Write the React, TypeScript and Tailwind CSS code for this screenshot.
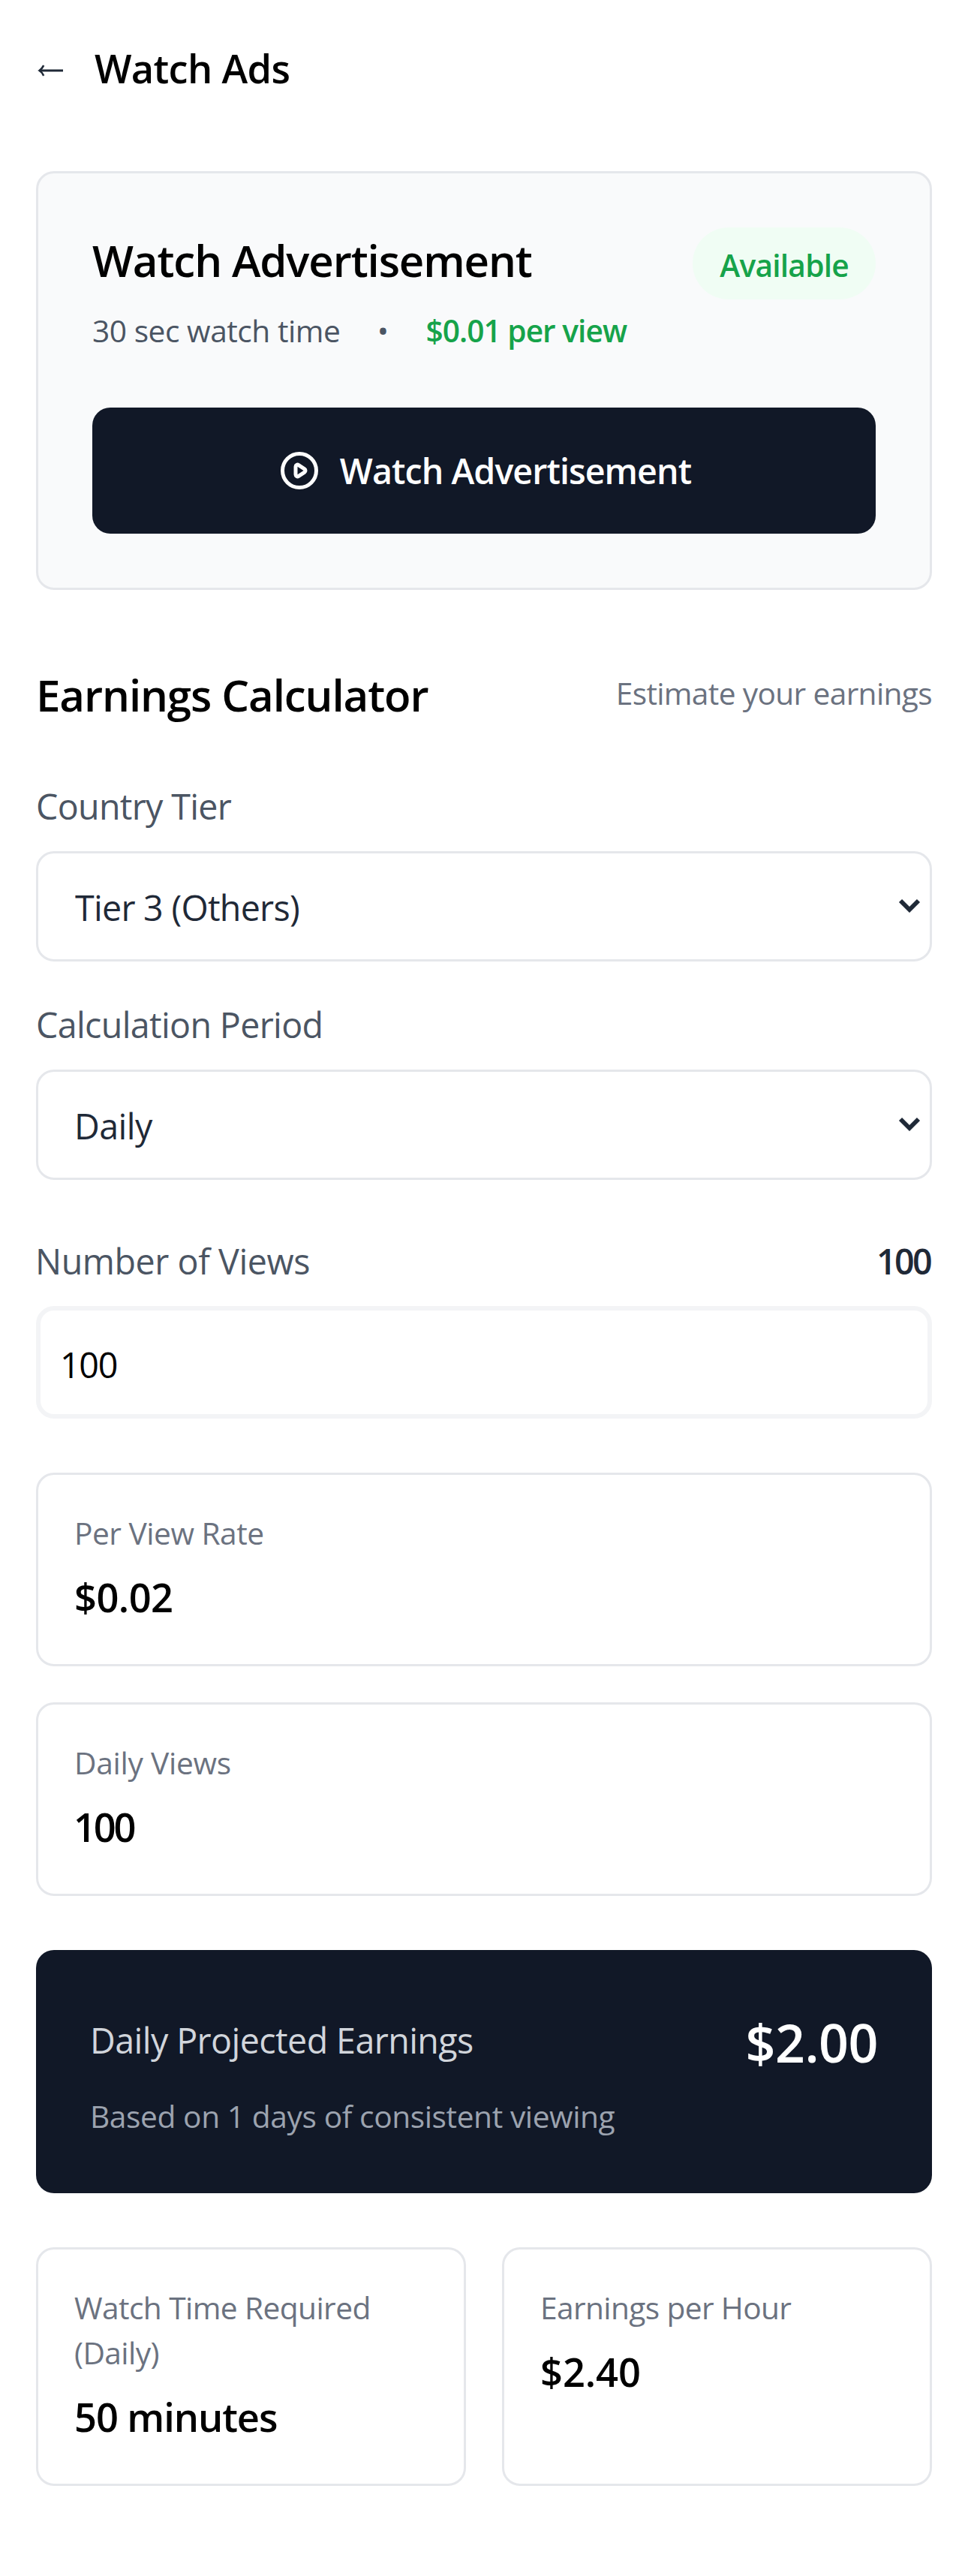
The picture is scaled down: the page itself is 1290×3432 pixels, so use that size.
import React, { useState } from "react";

/* Type scale: each entry keeps its line box height constant (84, 84, 72, 60, 96). */
const t60 = "text-[58.2px] leading-[81px] pt-[3px] font-semibold";
const t54 = "text-[52.4px] leading-[83px] pt-px font-semibold";
const t48 = "text-[46.6px] leading-[72px]";
const t42 = "text-[40.7px] leading-[58px] pb-0.5";
const t72 = "text-[69.8px] leading-[91px] pt-[5px] font-semibold";

function BackArrow() {
  return (
    <svg width="48" height="24" viewBox="0 0 48 24" fill="none" stroke="#1f2937" strokeWidth="3" className="mt-[7px] shrink-0">
      <path d="M4.5 12H36" />
      <path d="M10.2 5.2C8.6 8.4 6.8 10.6 4.6 12C6.8 13.4 8.6 15.6 10.2 18.8" strokeWidth="2.6" />
    </svg>
  );
}

function PlayCircle() {
  return (
    <svg width="60" height="60" viewBox="0 0 24 24" fill="none" stroke="currentColor" strokeWidth="2" strokeLinecap="round" strokeLinejoin="round" className="shrink-0">
      <path d="M14.752 11.168l-3.197-2.132A1 1 0 0010 9.87v4.263a1 1 0 001.555.832l3.197-2.132a1 1 0 000-1.664z" />
      <path d="M21 12a9 9 0 11-18 0 9 9 0 0118 0z" />
    </svg>
  );
}

function SelectField({ label, labelClass, options, selectClass }: { label: string; labelClass: string; options: string[]; selectClass: string }) {
  const [value, setValue] = useState(options[0]);
  return (
    <div>
      <label className={`${t48} mb-6 block text-[#4b5563] ${labelClass}`}>{label}</label>
      <div className="relative">
        <select
          value={value}
          onChange={(e) => setValue(e.target.value)}
          className={`${t48} block h-[147px] w-full appearance-none rounded-[24px] border-[3px] border-[#e5e7eb] bg-white pt-[3px] pr-20 text-[#1f2937] outline-none ${selectClass}`}
        >
          {options.map((o) => (
            <option key={o}>{o}</option>
          ))}
        </select>
        <svg width="30" height="20" viewBox="0 0 30 20" fill="none" stroke="#1f2937" strokeWidth="5.8" className="pointer-events-none absolute top-[63px] right-[15px]">
          <path d="M3 3L15 15L27 3" />
        </svg>
      </div>
    </div>
  );
}

function StatCard({ label, value, labelClass, valueClass }: { label: string; value: string; labelClass: string; valueClass: string }) {
  return (
    <div className="rounded-[24px] border-[3px] border-[#e5e7eb] bg-white p-12">
      <div className={`${t42} text-[#6b7280] ${labelClass}`}>{label}</div>
      <div className={`${t54} mt-3 ${valueClass}`}>{value}</div>
    </div>
  );
}

export default function App() {
  const [views, setViews] = useState("100");
  return (
    <div className="min-h-[3432px] w-[1290px] bg-white px-12 pt-12 pb-[120px] font-['Open_Sans','Noto_Sans',sans-serif] text-black">
      <header className="flex h-[84px] items-center gap-[30px]">
        <BackArrow />
        <h1 className={`${t54} tracking-[-0.0129em]`}>Watch Ads</h1>
      </header>

      <section className="mt-24 rounded-[24px] border-[3px] border-[#e5e7eb] bg-[#f9fafb] p-[72px]">
        <div className="flex items-start justify-between">
          <h2 className={`${t60} tracking-[-0.0195em]`}>Watch Advertisement</h2>
          <span className="rounded-full bg-[#f0fdf4] px-9 pt-[21px] pb-[17px] text-[40.7px] leading-[58px] font-semibold tracking-[-0.019em] text-[#16a34a]">
            Available
          </span>
        </div>
        <div className={`${t42} mt-3 flex gap-12 text-[#4b5563]`}>
          <span className="tracking-[-0.0115em]">30 sec watch time</span>
          <span className="w-[18px] text-center">•</span>
          <span className="font-semibold tracking-[-0.024em] text-[#16a34a]">$0.01 per view</span>
        </div>
        <button className="mt-[72px] flex h-[168px] w-full items-center justify-center gap-6 rounded-[24px] bg-[#111827] text-white">
          <PlayCircle />
          <span className={`${t48} font-semibold tracking-[-0.0203em]`}>Watch Advertisement</span>
        </button>
      </section>

      <div className="mt-24 flex items-center justify-between">
        <h2 className={`${t60} tracking-[-0.019em]`}>Earnings Calculator</h2>
        <span className={`${t42} tracking-[-0.0161em] text-[#6b7280]`}>Estimate your earnings</span>
      </div>

      <div className="mt-[72px] flex flex-col gap-12">
        <SelectField
          label="Country Tier"
          labelClass="tracking-[-0.0145em]"
          options={["Tier 3 (Others)", "Tier 2", "Tier 1"]}
          selectClass="pl-[49px] tracking-[-0.0156em]"
        />
        <SelectField
          label="Calculation Period"
          labelClass="tracking-[-0.014em]"
          options={["Daily", "Weekly", "Monthly"]}
          selectClass="pl-12 tracking-[-0.012em]"
        />
      </div>

      <div className={`${t48} mt-[72px] flex justify-between`}>
        <label className="-ml-px tracking-[-0.0093em] text-[#4b5563]">Number of Views</label>
        <span className="mr-0.5 font-semibold tracking-[-0.0575em] text-[#1f2937]">{views}</span>
      </div>
      <input
        value={views}
        onChange={(e) => setViews(e.target.value)}
        className={`${t48} mt-6 block h-[150px] w-full rounded-[24px] border-[6px] border-[#f3f4f6] bg-white pt-[6px] pr-6 pl-[26px] tracking-[-0.0282em] outline-none`}
      />

      <div className="mt-[72px] flex flex-col gap-12">
        <StatCard label="Per View Rate" labelClass="tracking-[-0.0123em]" value="$0.02" valueClass="tracking-[-0.01em]" />
        <StatCard label="Daily Views" labelClass="tracking-[-0.0068em]" value={views} valueClass="-ml-px tracking-[-0.06em]" />
      </div>

      <section className="mt-[72px] rounded-[24px] bg-[#111827] p-[72px]">
        <div className="flex items-center justify-between">
          <span className={`${t48} tracking-[-0.0125em] text-[#d1d5db]`}>Daily Projected Earnings</span>
          <span className={`${t72} tracking-[-0.0068em] text-white`}>$2.00</span>
        </div>
        <div className={`${t42} mt-6 tracking-[-0.0102em] text-[#9ca3af]`}>Based on 1 days of consistent viewing</div>
      </section>

      <div className="mt-[72px] grid grid-cols-2 gap-12">
        <div className="rounded-[24px] border-[3px] border-[#e5e7eb] bg-white p-12">
          <div className="-mt-px pb-px text-[40.7px] leading-[60px] tracking-[-0.0145em] text-[#6b7280]">
            Watch Time Required
            <br />
            (Daily)
          </div>
          <div className={`${t54} mt-3 tracking-[-0.0205em]`}>50 minutes</div>
        </div>
        <StatCard label="Earnings per Hour" labelClass="tracking-[-0.0155em]" value="$2.40" valueClass="tracking-[-0.001em]" />
      </div>
    </div>
  );
}
